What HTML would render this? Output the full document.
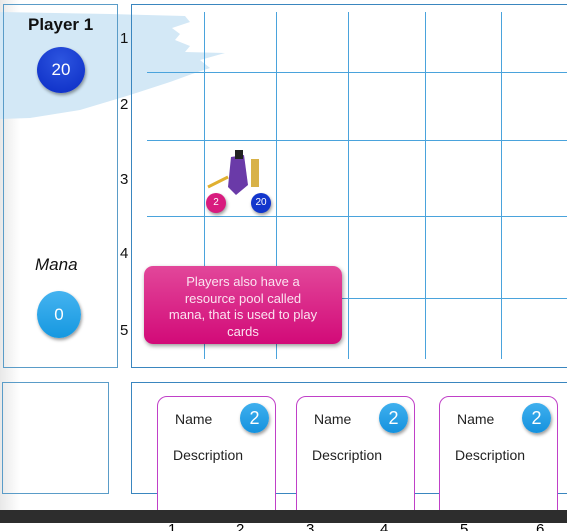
<!DOCTYPE html>
<html><head><style>
*{margin:0;padding:0;box-sizing:border-box}
body{width:567px;height:531px;overflow:hidden;background:#fff;position:relative;font-family:"Liberation Sans",sans-serif}
.abs{position:absolute}
.vl{position:absolute;width:1px;background:#4aa3dc;top:12px;height:347px}
.hl{position:absolute;height:1px;background:#4aa3dc;left:147px;right:0}
.num{position:absolute;font-size:15px;color:#111}
.circ{position:absolute;border-radius:50%;color:#fff;text-align:center;box-shadow:1px 2px 3px rgba(0,0,0,.4)}
.card{position:absolute;top:396px;width:119px;height:130px;border:1px solid #c040c8;border-radius:10px;background:#fff}
.card .n{position:absolute;left:17px;top:14px;font-size:14px;color:#222}
.card .d{position:absolute;left:15px;top:50px;font-size:14px;color:#222}
.card .c{width:29px;height:30px;line-height:30px;font-size:18px;top:6px;right:6px;background:linear-gradient(#3fb0ee,#1592de)}
</style></head><body>
<div class="abs" style="left:0;top:0;width:20px;height:531px;background:linear-gradient(90deg,#e8e8e8,#fff)"></div>
<svg class="abs" style="left:0;top:0" width="240" height="125"><path d="M0 12 L110 14 L185 16 L190 22 L172 28 L180 34 L175 40 L190 46 L185 52 L225 53 L200 60 L210 68 L192 74 L170 82 L130 95 L80 110 L30 118 L0 119 Z" fill="#d3e8f6"/></svg>
<div class="abs" style="left:3px;top:4px;width:115px;height:364px;border:1px solid #5a9cc8"></div>
<div class="abs" style="left:131px;top:4px;width:440px;height:364px;border:1px solid #3a86bf"></div>
<div class="abs" style="left:28px;top:15px;font-size:17px;font-weight:bold;color:#111">Player 1</div>
<div class="circ" style="left:37px;top:47px;width:48px;height:46px;line-height:46px;font-size:17px;background:radial-gradient(circle at 50% 30%,#2d55e0,#0a2bc4)">20</div>
<div class="abs" style="left:35px;top:255px;font-size:17px;font-style:italic;color:#111">Mana</div>
<div class="circ" style="left:37px;top:291px;width:44px;height:47px;line-height:47px;font-size:17px;background:linear-gradient(#45b3f0,#1698e0)">0</div>
<div class="vl" style="left:204px"></div><div class="vl" style="left:276px"></div><div class="vl" style="left:348px"></div><div class="vl" style="left:425px"></div><div class="vl" style="left:501px"></div>
<div class="hl" style="top:72px"></div><div class="hl" style="top:140px"></div><div class="hl" style="top:216px"></div><div class="hl" style="top:298px"></div>
<div class="num" style="left:120px;top:30px">1</div><div class="num" style="left:120px;top:96px">2</div><div class="num" style="left:120px;top:171px">3</div><div class="num" style="left:120px;top:245px">4</div><div class="num" style="left:120px;top:322px">5</div>
<div class="abs" style="left:170px;top:-13px;font-size:15px">1</div><div class="abs" style="left:238px;top:-13px;font-size:15px">2</div>
<svg class="abs" style="left:206px;top:145px" width="60" height="60"><path d="M25 12 L38 10 L42 40 L30 50 L22 42 Z" fill="#6a3aa8"/><rect x="45" y="14" width="8" height="28" fill="#d8b248"/><rect x="29" y="5" width="8" height="9" fill="#222"/><path d="M2 42 L22 32" stroke="#e0b030" stroke-width="3"/></svg>
<div class="circ" style="left:206px;top:193px;width:20px;height:20px;line-height:20px;font-size:10px;background:#d81b7e">2</div>
<div class="circ" style="left:251px;top:193px;width:20px;height:20px;line-height:20px;font-size:10px;background:#1236cc">20</div>
<div class="abs" style="left:144px;top:266px;width:198px;height:78px;border-radius:9px;background:linear-gradient(#e2479a,#d20a78);box-shadow:1px 2px 4px rgba(0,0,0,.4);color:#fbe3f0;font-size:13px;text-align:center;line-height:16.5px;padding-top:8px">Players also have a<br>resource pool called<br>mana, that is used to play<br>cards</div>
<div class="abs" style="left:2px;top:382px;width:107px;height:112px;border:1px solid #5a9cc8"></div>
<div class="abs" style="left:131px;top:382px;width:440px;height:112px;border:1px solid #3a86bf"></div>
<div class="card" style="left:157px"><div class="n">Name</div><div class="d">Description</div><div class="circ c">2</div></div>
<div class="card" style="left:296px"><div class="n">Name</div><div class="d">Description</div><div class="circ c">2</div></div>
<div class="card" style="left:439px"><div class="n">Name</div><div class="d">Description</div><div class="circ c">2</div></div>
<div class="abs" style="left:0;top:510px;width:567px;height:13px;background:#2d2d2d"></div>
<div class="abs" style="left:0;top:523px;width:567px;height:8px;background:#fff;overflow:hidden"><div style="position:absolute;top:-2px;left:168px;font-size:15px">1</div><div style="position:absolute;top:-2px;left:236px;font-size:15px">2</div><div style="position:absolute;top:-2px;left:306px;font-size:15px">3</div><div style="position:absolute;top:-2px;left:380px;font-size:15px">4</div><div style="position:absolute;top:-2px;left:460px;font-size:15px">5</div><div style="position:absolute;top:-2px;left:536px;font-size:15px">6</div></div>
</body></html>
